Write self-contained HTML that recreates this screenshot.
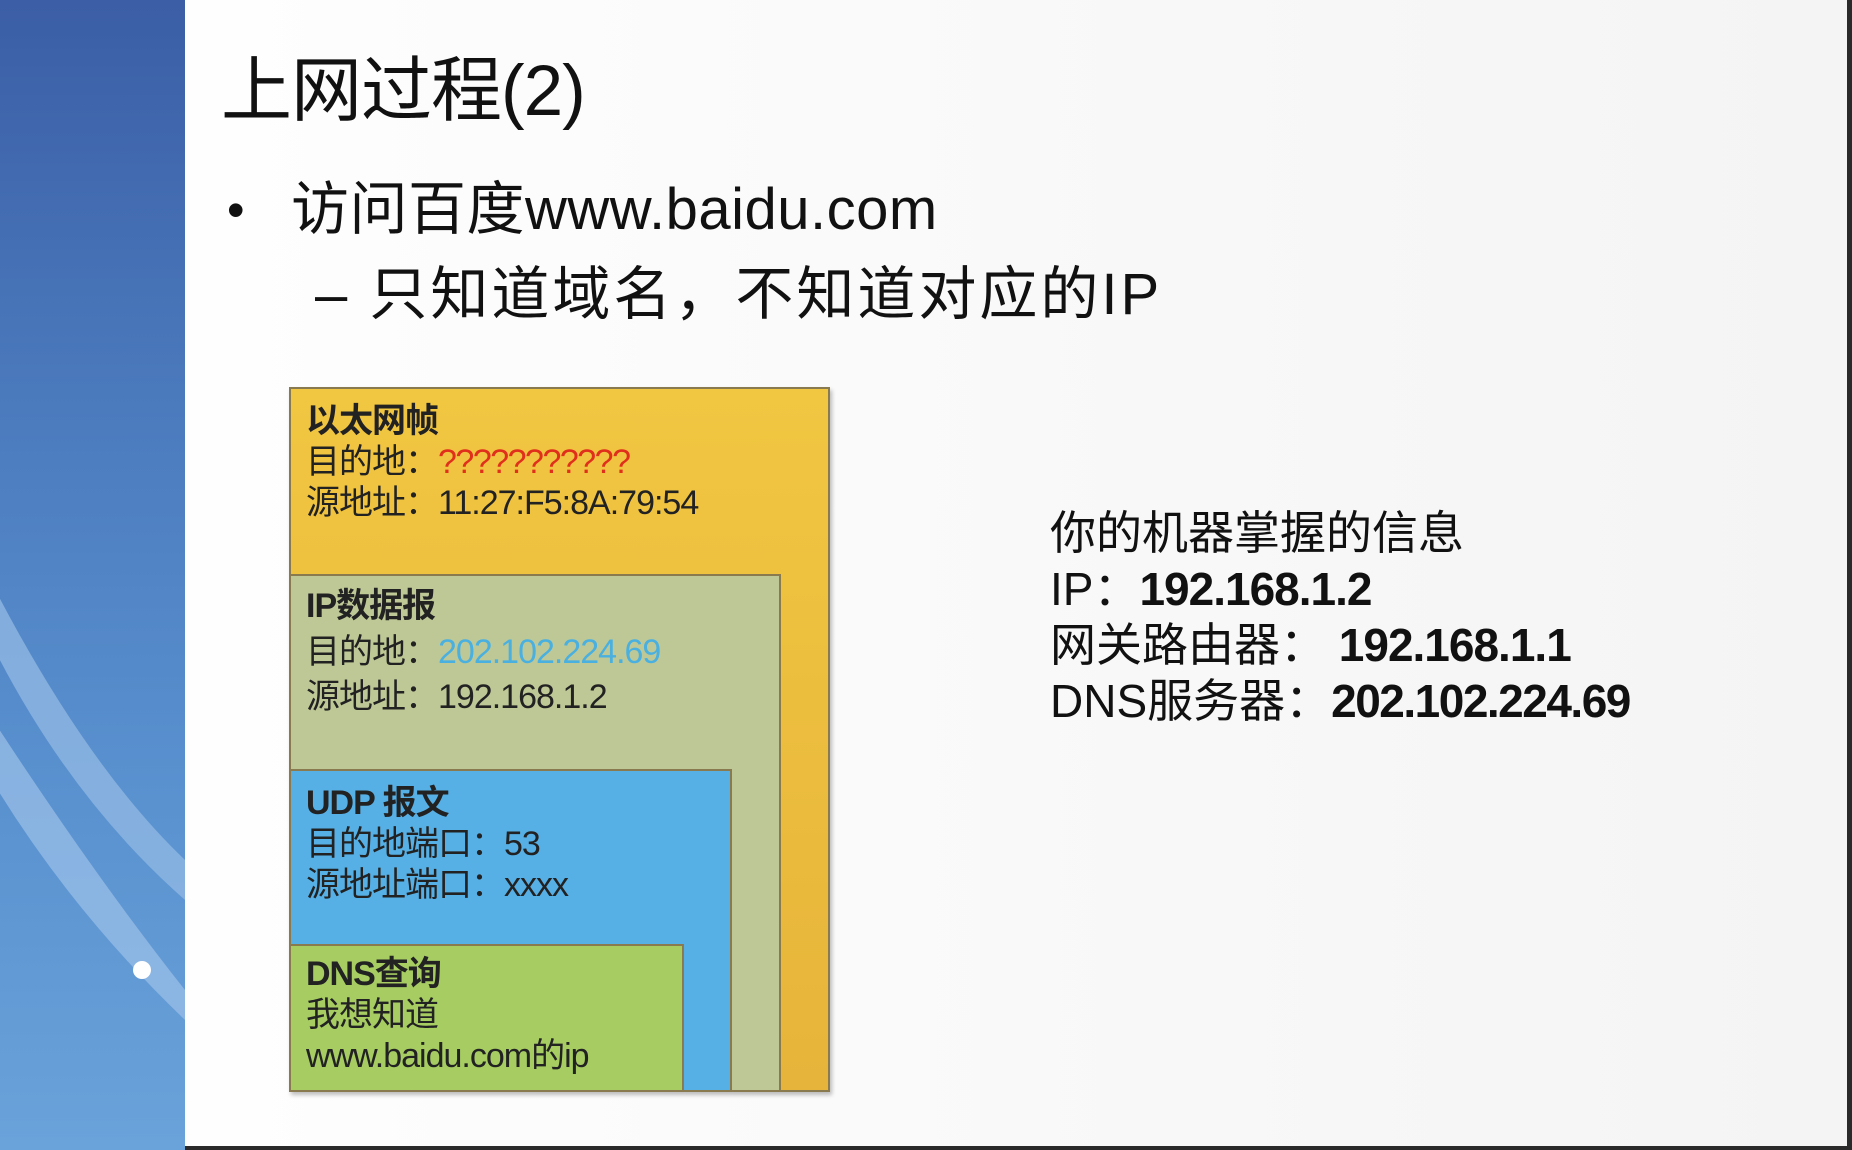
<!DOCTYPE html>
<html><head><meta charset="utf-8"><style>
html,body{margin:0;padding:0;width:1852px;height:1150px;overflow:hidden;background:#2a2a2a}
*{box-sizing:border-box}
.f{font-family:"Liberation Sans","Noto Sans CJK SC",sans-serif}
#side{position:absolute;left:0;top:0;width:185px;height:1150px;background:linear-gradient(180deg,#3b5ea6 0%,#4d7ec0 40%,#5a92d0 70%,#6aa2da 100%);overflow:hidden}
#slide{position:absolute;left:185px;top:0;width:1662px;height:1146px;background:linear-gradient(90deg,#fefefe,#f4f4f4)}
.abs{position:absolute;white-space:nowrap}
.box{position:absolute;border:2px solid #8a7a50;}
.t{position:absolute;left:15px;font-size:34px;line-height:41px;color:#222;white-space:nowrap;letter-spacing:-1px}
b{font-weight:bold}
</style></head><body>
<div id="side">
<svg width="185" height="1150" style="position:absolute;left:0;top:0">
<path d="M-20 560 Q 80 760 185 860 L185 900 Q 60 790 -20 620Z" fill="#8fb6e2" opacity="0.8"/>
<path d="M-20 700 Q 90 870 185 990 L185 1020 Q 60 900 -20 760Z" fill="#9cc0e8" opacity="0.7"/>
<circle cx="142" cy="970" r="9" fill="#fff"/>
</svg>
</div>
<div id="slide" class="f">
<div class="abs" style="left:36px;top:52px;font-size:71px;line-height:80px;color:#111;letter-spacing:-1px">上网过程(2)</div>
<div class="abs" style="left:42px;top:178px;font-size:50px;line-height:64px;color:#111">•</div>
<div class="abs" style="left:106px;top:178px;font-size:58px;line-height:64px;color:#111;letter-spacing:0.5px">访问百度www.baidu.com</div>
<div class="abs" style="left:130px;top:263px;font-size:58px;line-height:64px;color:#111;letter-spacing:3px">–&nbsp;只知道域名，不知道对应的IP</div>

<div class="box" style="left:104px;top:387px;width:541px;height:705px;background:linear-gradient(180deg,#f1c641,#e6b43a);box-shadow:2px 3px 4px rgba(0,0,0,.25)">
 <div class="t" style="top:12px"><b>以太网帧</b><br>目的地：<span style="color:#e0301c;letter-spacing:-1.5px">???????????</span><br>源地址：11:27:F5:8A:79:54</div>
</div>
<div class="box" style="left:104px;top:574px;width:492px;height:518px;background:#bec896">
 <div class="t" style="top:10px"><b>IP数据报</b><br><span style="line-height:50px">目的地：<span style="color:#4ab0e0">202.102.224.69</span></span><br>源地址：192.168.1.2</div>
</div>
<div class="box" style="left:104px;top:769px;width:443px;height:323px;background:#56b0e6">
 <div class="t" style="top:12px"><b>UDP 报文</b><br>目的地端口：53<br>源地址端口：xxxx</div>
</div>
<div class="box" style="left:104px;top:944px;width:395px;height:148px;background:#a6cc62">
 <div class="t" style="top:8px"><b>DNS查询</b><br>我想知道<br>www.baidu.com的ip</div>
</div>

<div class="abs" style="left:865px;top:505px;font-size:46px;line-height:56px;color:#111">你的机器掌握的信息<br>IP：<b style="letter-spacing:-1px">192.168.1.2</b><br>网关路由器： <b style="letter-spacing:-1px">192.168.1.1</b><br>DNS服务器：<b style="letter-spacing:-1.5px">202.102.224.69</b></div>
</div>
</body></html>
